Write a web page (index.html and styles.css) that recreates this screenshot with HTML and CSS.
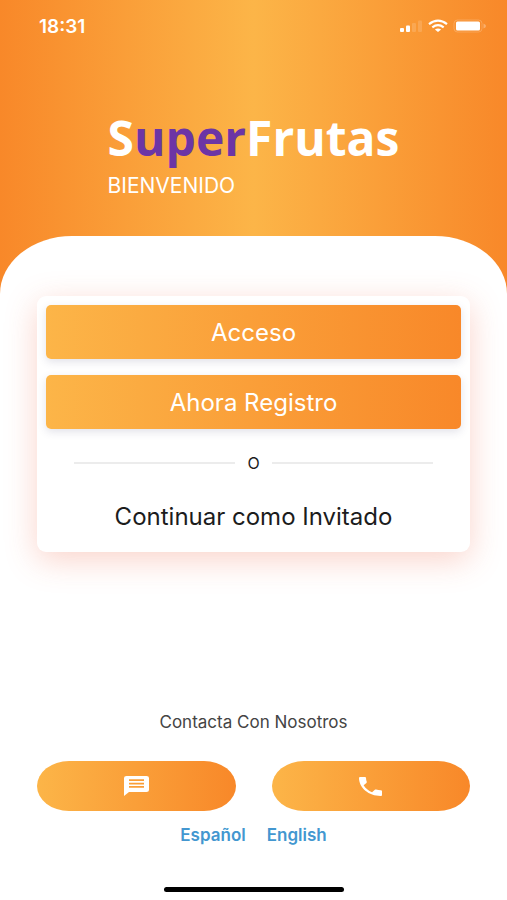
FILE: index.html
```html
<!DOCTYPE html>
<html lang="es">
<head>
<meta charset="utf-8">
<meta name="viewport" content="width=device-width, initial-scale=1">
<title>SuperFrutas</title>
<link rel="stylesheet" href="styles.css">
</head>
<body>
<div class="screen">
  <div class="status">
    <time class="clock">18:31</time>
    <div class="indicators">
      <svg width="24" height="14" viewBox="0 0 24 14" aria-hidden="true">
        <rect x="1" y="9" width="4" height="4" rx="1" fill="#fff"/>
        <rect x="7" y="6.500" width="4" height="6.500" rx="1" fill="#fff"/>
        <rect x="13" y="4" width="4" height="9" rx="1" fill="#fff" opacity=".15"/>
        <rect x="19" y="1.500" width="4" height="11.500" rx="1" fill="#fff" opacity=".15"/>
      </svg>
      <svg width="20" height="14" viewBox="0 0 20 14" fill="none" stroke="#fff" stroke-width="2.200" aria-hidden="true">
        <path d="M1 5.200Q10-1.800 19 5.200"/>
        <path d="M4.300 8.300Q10 3.900 15.700 8.300"/>
        <path d="M10 12.900L6.900 10.600Q10 8.400 13.100 10.600Z" fill="#fff" stroke="none"/>
      </svg>
      <svg width="34" height="14" viewBox="0 0 34 14" aria-hidden="true">
        <rect x="1" y="1" width="28" height="12" rx="3.500" fill="none" stroke="#fff" opacity=".2"/>
        <rect x="3" y="2.500" width="24" height="9" rx="1.500" fill="#fff"/>
        <path d="M30.500 4.500Q33 5.500 33 7T30.500 9.500Z" fill="#fff" opacity=".3"/>
      </svg>
    </div>
  </div>

  <header class="brand">
    <h1 class="logo">S<span class="logo-accent">uper</span>Frutas</h1>
    <p class="welcome">BIENVENIDO</p>
  </header>

  <main class="sheet">
    <section class="card">
      <button class="action" type="button">Acceso</button>
      <button class="action" type="button">Ahora Registro</button>
      <div class="divider">O</div>
      <a class="guest" href="#">Continuar como Invitado</a>
    </section>

    <footer class="contact">
      <p class="contact-title">Contacta Con Nosotros</p>
      <div class="pills">
        <button class="pill" type="button" aria-label="Mensaje">
          <svg width="25" height="20" viewBox="2 2 20 20" preserveAspectRatio="none" aria-hidden="true">
            <path fill="#fff" fill-rule="evenodd" d="M4 2h16a2 2 0 0 1 2 2v12a2 2 0 0 1-2 2H6l-4 4V4a2 2 0 0 1 2-2zM6 5.300v1.700h12V5.300zM6 8.700v1.700h12V8.700zM6 12.100v1.700h12v-1.700z"/>
          </svg>
        </button>
        <button class="pill" type="button" aria-label="Llamar">
          <svg width="23" height="19" viewBox="3 3 18 18" preserveAspectRatio="none" aria-hidden="true">
            <path fill="#fff" d="M6.620 10.790c1.440 2.830 3.760 5.140 6.590 6.590l2.200-2.200c.27-.27.67-.36 1.020-.24 1.120.37 2.330.57 3.570.57.55 0 1 .45 1 1V20c0 .55-.45 1-1 1-9.390 0-17-7.610-17-17 0-.55.45-1 1-1h3.500c.55 0 1 .45 1 1 0 1.250.2 2.450.57 3.570.11.35.03.74-.25 1.020l-2.200 2.200z"/>
          </svg>
        </button>
      </div>
      <nav class="languages">
        <a href="#">Español</a>
        <a href="#" lang="en">English</a>
      </nav>
    </footer>
    <div class="home-bar"></div>
  </main>
</div>
</body>
</html>
```
FILE: styles.css
```css
* {
  box-sizing: border-box;
}

body {
  margin: 0;
  font-family: Inter, "Liberation Sans", sans-serif;
  color: #1c1c1c;
}

h1,
p {
  margin: 0;
}

a {
  color: inherit;
  text-decoration: none;
}

button {
  border: 0;
  font: inherit;
  cursor: pointer;
}

svg {
  display: block;
}

.screen {
  display: flex;
  flex-direction: column;
  min-height: 100vh;
  background: linear-gradient(90deg, #f88829, #fcb548 50%, #f88829);
}

.status {
  display: flex;
  justify-content: space-between;
  align-items: center;
  height: 52px;
  padding: 0 20px 0 39px;
  color: #fff;
}

.clock {
  font-size: 19px;
  font-weight: 600;
}

.indicators {
  display: flex;
  align-items: center;
  gap: 5px;
}

.brand {
  width: fit-content;
  height: 184px;
  margin: 0 auto;
  padding-top: 56px;
  color: #fff;
}

.logo {
  font-family: "Open Sans", "Noto Sans", sans-serif;
  font-size: 48px;
  font-weight: 700;
  line-height: 60px;
}

.logo-accent {
  color: #6c35a5;
}

.welcome {
  font-size: 21px;
  line-height: 36px;
}

.sheet {
  display: flex;
  flex: 1;
  flex-direction: column;
  padding: 60px 37px 8px;
  border-radius: 72px 72px 0 0 / 58px 58px 0 0;
  background: #fff;
}

.card {
  display: flex;
  flex-direction: column;
  gap: 16px;
  padding: 9px;
  border-radius: 9px;
  background: #fff;
  box-shadow: 0 8px 32px rgba(238, 94, 60, 0.27);
}

.action {
  height: 54px;
  border-radius: 5px;
  background: linear-gradient(90deg, #fcb548, #f88829);
  box-shadow: 0 3px 8px rgba(60, 60, 110, 0.15);
  color: #fff;
  font-size: 24px;
}

.divider {
  display: flex;
  align-items: center;
  gap: 12px;
  padding: 8px 28px;
  font-size: 16px;
  line-height: 20px;
}

.divider::before,
.divider::after {
  content: "";
  flex: 1;
  height: 2px;
  background: #ececec;
}

.guest {
  padding: 4px 0 10px;
  font-size: 24px;
  line-height: 32px;
  text-align: center;
}

.contact {
  margin-top: auto;
}

.contact-title {
  color: #444;
  font-size: 17px;
  line-height: 20px;
  text-align: center;
}

.pills {
  display: grid;
  grid-template-columns: 1fr 1fr;
  gap: 36px;
  margin-top: 29px;
}

.pill {
  display: flex;
  justify-content: center;
  align-items: center;
  height: 50px;
  padding: 0;
  border-radius: 32px / 25px;
  background: linear-gradient(90deg, #fcb548, #f88829);
}

.languages {
  display: flex;
  justify-content: center;
  gap: 21px;
  margin-top: 14px;
  color: #4397d0;
  font-size: 17px;
  font-weight: 600;
  line-height: 20px;
}

.home-bar {
  width: 180px;
  height: 5px;
  margin: 42px auto 0;
  border-radius: 3px;
  background: #000;
}
```
